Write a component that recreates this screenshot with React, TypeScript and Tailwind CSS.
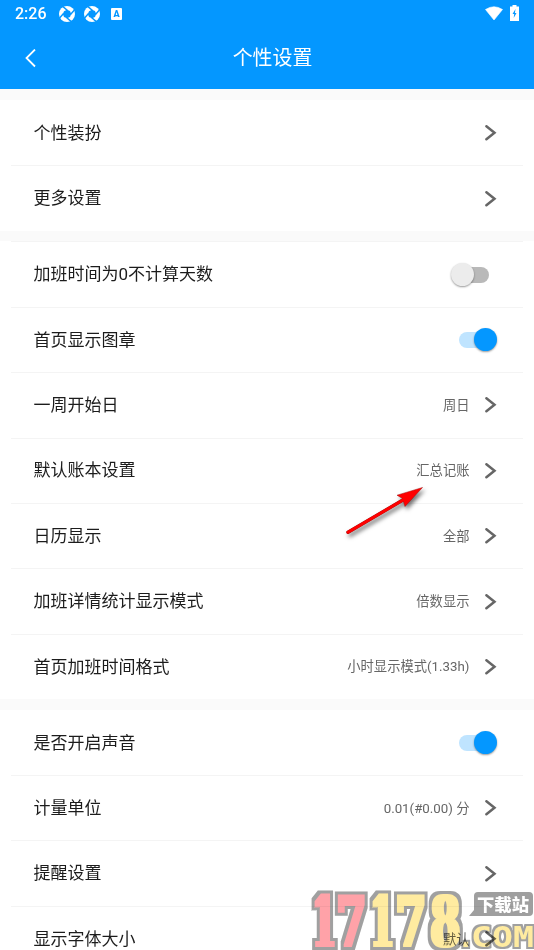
import { useState } from 'react';

type Item = {
  label: string;
  value?: string;
  toggle?: boolean;
};

const SECTIONS: Item[][] = [
  [{ label: '个性装扮' }, { label: '更多设置' }],
  [
    { label: '加班时间为0不计算天数', toggle: false },
    { label: '首页显示图章', toggle: true },
    { label: '一周开始日', value: '周日' },
    { label: '默认账本设置', value: '汇总记账' },
    { label: '日历显示', value: '全部' },
    { label: '加班详情统计显示模式', value: '倍数显示' },
    { label: '首页加班时间格式', value: '小时显示模式(1.33h)' },
  ],
  [
    { label: '是否开启声音', toggle: true },
    { label: '计量单位', value: '0.01(#0.00) 分' },
    { label: '提醒设置' },
    { label: '显示字体大小', value: '默认' },
  ],
];

// digit, left edge, width, color
const DIGITS: [string, number, number, string][] = [
  ['1', 6.4, 23.6, '#ffa2a8'],
  ['7', 30.5, 29.7, '#ffa2a8'],
  ['1', 64.4, 23.6, '#ffeba0'],
  ['7', 89.5, 30.7, '#ffeba0'],
  ['8', 124.5, 29.7, '#ffeba0'],
];

function Aperture() {
  return (
    <svg width="16" height="16" viewBox="0 0 16 16">
      <circle cx="8" cy="8" r="8" fill="#fff" />
      <path d="M5 5.200 8 3.700 11 5 12.200 8 11 11 8 12.300 5 11 3.800 8Z" fill="#0497ff" />
      <g stroke="#0497ff" strokeWidth="1.4">
        <path d="M8.500 4.500 4 .6" />
        <path d="M11.500 8.500 15.400 4" />
        <path d="M7.500 11.500 12 15.400" />
        <path d="M4.500 7.500.6 12" />
      </g>
    </svg>
  );
}

function Chevron() {
  return (
    <svg width="12" height="16" viewBox="0 0 12 16" fill="none" stroke="#666" strokeWidth="2.5">
      <path d="M1.400 1.300 9.500 7.800 1.400 14.300" strokeLinecap="round" strokeLinejoin="miter" />
    </svg>
  );
}

function Toggle({ initial }: { initial: boolean }) {
  const [on, setOn] = useState(initial);

  return (
    <button
      onClick={() => setOn(v => !v)}
      className={`mr-2 flex h-4 w-[30px] items-center rounded-full ${on ? 'justify-end bg-[#bfe4ff]' : 'justify-start bg-[#b9b9b9]'}`}
    >
      <span
        className={`size-[23px] shrink-0 rounded-full shadow-[0_1px_2px_rgba(0,0,0,0.4)] ${on ? 'translate-x-2 bg-[#0497ff]' : '-translate-x-2 bg-[#ececec]'}`}
      />
    </button>
  );
}

function Row({ item, line }: { item: Item; line: boolean }) {
  return (
    <div className={`mx-[11px] flex h-[65.4px] items-center border-t pr-[26px] pl-[22.500px] ${line ? 'border-[#f4f4f4]' : 'border-white'}`}>
      <span className="flex-1 pt-px text-[17px] text-[#1c1c1c]">{item.label}</span>
      {item.value && <span className="mr-[15.500px] pt-px text-[13.3px] text-[#666]">{item.value}</span>}
      {item.toggle === undefined ? <Chevron /> : <Toggle initial={item.toggle} />}
    </div>
  );
}

function Arrow() {
  return (
    <svg className="absolute top-[480px] left-[341px] drop-shadow-[2px_3px_2px_rgba(0,0,0,0.55)]" width="90" height="60" viewBox="0 0 90 60">
      <path d="M7 52.300 64 18.800" stroke="#a01010" strokeWidth="3.4" strokeLinecap="round" />
      <path d="M81.500 7.500 56 15.200 61.500 18.500 64 26.500Z" fill="#f00" stroke="#a01010" strokeWidth=".5" />
      <path d="M7 52.200 65 18.200" stroke="#f00" strokeWidth="2.8" strokeLinecap="round" />
    </svg>
  );
}

function SiteMark() {
  return (
    <svg className="pointer-events-none absolute top-[885px] left-[306px] mix-blend-multiply" width="228" height="65" viewBox="0 0 228 65">
      <defs>
        <filter id="rim" filterUnits="userSpaceOnUse" x="0" y="0" width="228" height="70" colorInterpolationFilters="sRGB">
          <feMorphology in="SourceGraphic" operator="dilate" radius="2 1" result="face" />
          <feMorphology in="SourceAlpha" operator="dilate" radius="5 4" result="edge" />
          <feFlood floodColor="#a0a0a0" />
          <feComposite in2="edge" operator="in" result="gray" />
          <feMerge>
            <feMergeNode in="gray" />
            <feMergeNode in="face" />
          </feMerge>
        </filter>
        <filter id="thin-rim" filterUnits="userSpaceOnUse" x="140" y="30" width="90" height="40" colorInterpolationFilters="sRGB">
          <feMorphology in="SourceAlpha" operator="dilate" radius="2 2" result="edge" />
          <feFlood floodColor="#a0a0a0" />
          <feComposite in2="edge" operator="in" result="gray" />
          <feMerge>
            <feMergeNode in="gray" />
            <feMergeNode in="SourceGraphic" />
          </feMerge>
        </filter>
      </defs>
      <g fontFamily="'DejaVu Serif', serif" fontWeight="700" fontSize="70" filter="url(#rim)">
        {DIGITS.map(([d, x, w, color], i) => (
          <text key={i} x={x} y="60.500" textLength={w} lengthAdjust="spacingAndGlyphs" fill={color}>{d}</text>
        ))}
      </g>
      <g fontFamily="'DejaVu Sans Mono', monospace" fontWeight="700" fontSize="29" fill="#ffeba0" filter="url(#thin-rim)">
        <text x="151" y="62">.</text>
        <text x="165" y="62" textLength="63" lengthAdjust="spacingAndGlyphs">COM</text>
      </g>
      <path d="M172 7h51q4 0 4 4v16q0 4-4 4h-60l5-6V11q0-4 4-4Z" fill="#9f9f9f" />
      <text x="171" y="25.500" fontSize="17" fontWeight="900" fill="#fff" textLength="52" lengthAdjust="spacingAndGlyphs">下载站</text>
    </svg>
  );
}

export default function App() {
  return (
    <div className="relative h-[950px] w-[534px] overflow-hidden bg-[#fafafa] font-['Roboto','Noto_Sans_CJK_SC',sans-serif]">
      <header className="h-[89px] bg-[#0497ff] text-white">
        <div className="flex h-7 items-center pr-[15px] pl-[15px]">
          <span className="w-11 text-[16px] font-medium">2:26</span>
          <div className="flex flex-1 items-center gap-[9px]">
            <Aperture />
            <Aperture />
            <span className="ml-0.5 flex h-[12px] w-[11px] items-center justify-center rounded-[1px] bg-white text-[9px] leading-none font-black text-[#0497ff]">A</span>
          </div>
          <svg className="mr-[7px] -mt-0.5" width="18" height="16" viewBox="0 0 18 16">
            <path d="M.5 4.500Q9-1 17.500 4.500L9 15Z" fill="#fff" stroke="#fff" strokeWidth=".6" />
          </svg>
          <svg className="-mt-0.5" width="9" height="16" viewBox="0 0 9 16">
            <path d="M2.500 0h4v1.500H9V16H0V1.500h2.500Z" fill="#fff" />
            <path d="M5.500 4 2.500 9h1.700L3.700 13 6.500 8H4.900Z" fill="#0497ff" />
          </svg>
        </div>
        <div className="flex h-[60px] items-center pr-[25px] pl-[25px]">
          <svg width="11" height="19" viewBox="0 0 11 19" fill="none" stroke="#fff" strokeWidth="1.8">
            <path d="M10 .5 1.500 9 10 17.500" />
          </svg>
          <h1 className="flex-1 pt-0.5 text-center text-[19.9px]">个性设置</h1>
        </div>
      </header>
      <main className="flex flex-col gap-[10.6px] pt-[11px]">
        {SECTIONS.map((items, i) => (
          <section key={i} className="bg-white">
            {items.map((item, j) => (
              <Row key={item.label} item={item} line={j > 0 || i === 1} />
            ))}
          </section>
        ))}
      </main>
      <Arrow />
      <SiteMark />
    </div>
  );
}
